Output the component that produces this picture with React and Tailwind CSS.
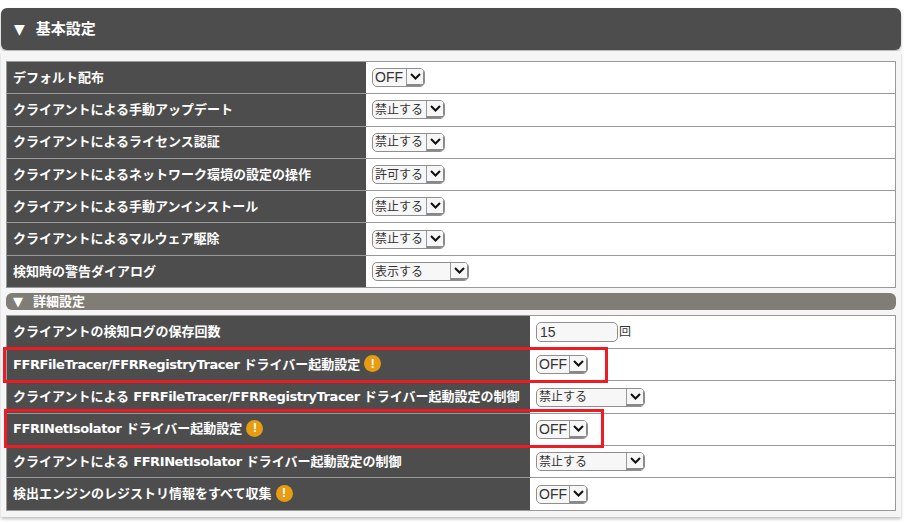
import React from 'react';

// 英字だけ DejaVu にして字間を詰める
const Mixed = ({ text }) =>
  text.split(/([A-Za-z/ ]+)/).map((part, i) =>
    /[A-Za-z ]/.test(part) ? (
      <span key={i} className="font-['DejaVu_Sans'] text-[13px] tracking-[-0.42px]">{part}</span>
    ) : (
      <span key={i} className="text-[13px]">{part}</span>
    )
  );

const SelectLabel = ({ text }) =>
  /[A-Z]/.test(text) ? (
    <span className="text-[14px]">{text}</span>
  ) : (
    <span className="text-[12px]">{text}</span>
  );

const Select = ({ label, width }) => (
  <div className={`flex h-[19px] items-stretch overflow-hidden rounded-[5px] border border-[#8f8f8f] bg-[#f7f7f7] ${width}`}>
    <span className="flex flex-1 items-center pl-[2px] text-[#333] whitespace-nowrap">
      <SelectLabel text={label} />
    </span>
    <span className="flex w-[18px] items-center justify-center border-l border-[#999] border-b-2 border-r border-b-[#888] border-r-[#888] bg-[#f7f7f7]">
      <svg width="11" height="7" viewBox="0 0 11 7" fill="none">
        <path d="M1 1l4.500 4.500L10 1" stroke="#111" strokeWidth="2" />
      </svg>
    </span>
  </div>
);

const Warn = () => (
  <span className="ml-[4px] flex h-[17px] w-[17px] shrink-0 items-center justify-center rounded-full bg-[#e89c12] text-[12px] font-bold leading-none text-white">
    !
  </span>
);

const Row = ({ label, warn, labelWidth, children, height = 'h-[32.3px]', last }) => (
  <div className={`flex ${height} ${last ? '' : 'border-b border-[#999]'}`}>
    <div className={`flex ${labelWidth} shrink-0 items-center bg-[#4d4d4d] pl-[6px] pb-[2px] font-bold text-white whitespace-nowrap`}>
      <span>
        <Mixed text={label} />
      </span>
      {warn && <Warn />}
    </div>
    <div className="flex flex-1 items-center gap-[1px] bg-white pl-[6px]">{children}</div>
  </div>
);

const basicRows = [
  ['デフォルト配布', 'OFF', 'w-[53px]'],
  ['クライアントによる手動アップデート', '禁止する', 'w-[73px]'],
  ['クライアントによるライセンス認証', '禁止する', 'w-[73px]'],
  ['クライアントによるネットワーク環境の設定の操作', '許可する', 'w-[73px]'],
  ['クライアントによる手動アンインストール', '禁止する', 'w-[73px]'],
  ['クライアントによるマルウェア駆除', '禁止する', 'w-[73px]'],
  ['検知時の警告ダイアログ', '表示する', 'w-[97px]'],
];

const detailRows = [
  ['FFRFileTracer/FFRRegistryTracer ドライバー起動設定', 'OFF', 'w-[52px]', true],
  ['クライアントによる FFRFileTracer/FFRRegistryTracer ドライバー起動設定の制御', '禁止する', 'w-[109px]', false],
  ['FFRINetIsolator ドライバー起動設定', 'OFF', 'w-[52px]', true],
  ['クライアントによる FFRINetIsolator ドライバー起動設定の制御', '禁止する', 'w-[109px]', false],
  ['検出エンジンのレジストリ情報をすべて収集', 'OFF', 'w-[52px]', true],
];

export default function App() {
  return (
    <div className="relative h-[523px] w-[917px] bg-white pt-[8px] pl-[1px] font-['Liberation_Sans','Noto_Sans_CJK_JP',sans-serif]">
      <div className="flex h-[42px] w-[900px] items-center rounded-[6px] bg-[#4d4d4d] pl-[13px] font-bold text-white shadow-[0_2px_3px_rgba(0,0,0,0.3)]">
        <span className="mr-[11px] font-['DejaVu_Sans'] text-[14px]">▼</span>
        <span className="text-[15px]">基本設定</span>
      </div>

      <div className="mt-[1px] w-[900px] bg-[#f5f5f5] px-[5px] pt-[10px] pb-[6px] shadow-[0_2px_3px_rgba(0,0,0,0.25)]">
        <div className="border border-[#999]">
          {basicRows.map(([label, value, width], i) => (
            <Row
              key={label}
              label={label}
              labelWidth="w-[359px]"
              height={i === basicRows.length - 1 ? 'h-[31.6px]' : 'h-[32.3px]'}
              last={i === basicRows.length - 1}
            >
              <Select label={value} width={width} />
            </Row>
          ))}
        </div>

        <div className="mt-[5px] mb-[5px] flex h-[17px] items-center rounded-[6px] bg-[#7f7d76] pl-[7px] font-bold text-white">
          <span className="mr-[10px] font-['DejaVu_Sans'] text-[13px]">▼</span>
          <span className="text-[13px]">詳細設定</span>
        </div>

        <div className="border border-[#999]">
          <Row label="クライアントの検知ログの保存回数" labelWidth="w-[523px]" height="h-[32.8px]">
            <div className="h-[20px] w-[82px] rounded-[5px] border border-[#8f8f8f] bg-[#f7f7f7] pl-[3px] text-[14px] leading-[18px] text-[#333]">15</div>
            <span className="text-[12px] text-[#333]">回</span>
          </Row>
          {detailRows.map(([label, value, width, warn], i) => (
            <Row
              key={label}
              label={label}
              warn={warn}
              labelWidth="w-[523px]"
              height={i === detailRows.length - 1 ? 'h-[31.6px]' : 'h-[32.3px]'}
              last={i === detailRows.length - 1}
            >
              <Select label={value} width={width} />
            </Row>
          ))}
        </div>
      </div>

      {/* 赤枠 */}
      <div className="absolute left-[3px] top-[347px] h-[36px] w-[605px] border-[3px] border-[#ed1c24]" />
      <div className="absolute left-[4px] top-[409px] h-[39px] w-[600px] border-[3px] border-[#ed1c24]" />
    </div>
  );
}
